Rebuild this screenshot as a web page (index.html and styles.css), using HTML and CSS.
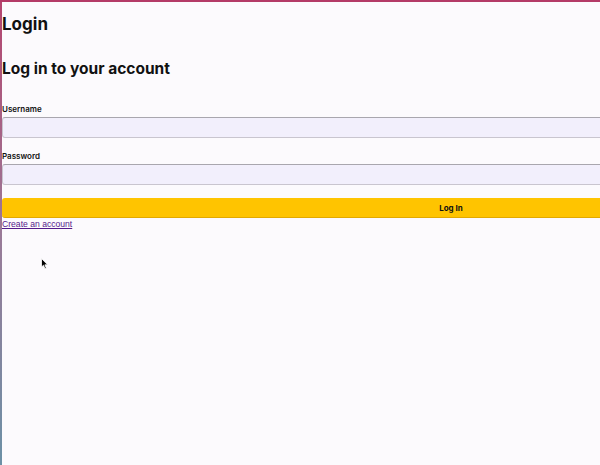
FILE: index.html
```html
<!DOCTYPE html>
<html>
<head>
<meta charset="utf-8">
<title>Login</title>
<link rel="stylesheet" href="styles.css">
</head>
<body>
<div class="frame">
  <div class="content">
    <h1 class="title">Login</h1>
    <h2 class="subtitle">Log in to your account</h2>
    <form class="form">
      <label class="label" for="username">Username</label>
      <input class="input" id="username" type="text">
      <label class="label" for="password">Password</label>
      <input class="input" id="password" type="password">
      <button class="btn" type="button">Log In</button>
    </form>
    <a class="link" href="#">Create an account</a>
  </div>
  <svg class="cursor" width="8" height="12" viewBox="0 0 8 12"><path d="M0.5 0.5 L0.5 9 L2.5 7.2 L4 10.8 L5.3 10.2 L3.9 6.8 L6.6 6.8 Z" fill="#000" stroke="#fff" stroke-width="0.8"/></svg>
</div>
</body>
</html>
```
FILE: styles.css
```css
html, body {
  margin: 0;
  padding: 0;
  overflow: hidden;
  width: 600px;
  height: 465px;
}
.frame {
  position: relative;
  width: 600px;
  height: 465px;
  box-sizing: border-box;
  border-top: 2px solid #b43a67;
  padding-left: 2px;
  background: linear-gradient(#b5456f, #9a7a98 50%, #6c90a6) left top / 2px 100% no-repeat, #fcfafd;
  overflow: hidden;
  font-family: Inter, "Noto Sans", sans-serif;
  color: #111;
}
.content {
  width: 898px;
}
.title {
  margin: 10px 0 0;
  font-size: 17px;
  line-height: 24px;
  font-weight: 700;
}
.subtitle {
  margin: 22px 0 0;
  font-size: 15.5px;
  line-height: 22px;
  font-weight: 700;
}
.form {
  display: flex;
  flex-direction: column;
  margin-top: 24px;
}
.label {
  font-size: 8px;
  font-weight: 600;
  line-height: 10px;
  margin-bottom: 3px;
}
.input {
  box-sizing: border-box;
  height: 21px;
  margin: 0 0 13px;
  border: 1px solid #c9c5cf;
  border-top-color: #a9a6ae;
  border-radius: 3px;
  background: #f2effc;
  padding: 0 6px;
}
.btn {
  box-sizing: border-box;
  height: 20px;
  margin: 0 0 1px;
  border: none;
  border-bottom: 1px solid #e2a900;
  border-radius: 3px;
  background: #ffc400;
  font-family: Inter, sans-serif;
  font-size: 8px;
  font-weight: 700;
  color: #111;
}
.link {
  display: block;
  width: fit-content;
  font-family: "Liberation Sans", Arial, sans-serif;
  font-size: 8.6px;
  line-height: 11px;
  color: #551a8b;
}
.cursor {
  position: absolute;
  left: 41px;
  top: 256px;
}
```
